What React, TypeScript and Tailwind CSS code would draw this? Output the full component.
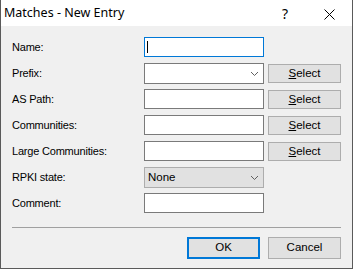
import React from "react";

const Chevron = () => (
  <svg width="9" height="6" viewBox="0 0 9 6" className="absolute right-[4px] top-1/2 -translate-y-1/2">
    <polyline points="1,1 4.5,4.5 8,1" fill="none" stroke="#606060" strokeWidth="1" />
  </svg>
);

const SelectBtn = () => (
  <button className="w-[73px] h-[19px] mt-px ml-[4px] bg-[#e1e1e1] border border-[#adadad] text-[11.5px] leading-none text-black flex items-center justify-center">
    <span><span className="underline">S</span>elect</span>
  </button>
);

const TextBox = ({ focused }: { focused?: boolean }) => (
  <div
    className={`relative w-[120px] h-[20px] bg-white border ${
      focused ? "border-[#0078d7]" : "border-[#7a7a7a]"
    }`}
  >
    {focused && <div className="absolute left-[2px] top-[3px] w-px h-[12px] bg-black" />}
  </div>
);

const Combo = () => (
  <div className="relative w-[120px] h-[21px] bg-white border border-[#7a7a7a]">
    <Chevron />
  </div>
);

const Row = ({ label, children }: { label: string; children: React.ReactNode }) => (
  <div className="flex h-[26px] items-start">
    <div className="w-[132px] h-[20px] flex items-center text-[11px] tracking-[-0.2px] text-black">{label}</div>
    <div className="flex items-start">{children}</div>
  </div>
);

export default function App() {
  return (
    <div
      className="w-[353px] h-[269px] bg-[#f0f0f0] border-l border-r border-b border-[#5a5a5a] flex flex-col"
      style={{ fontFamily: '"Liberation Sans", Arial, sans-serif' }}
    >
      <div className="h-[26px] bg-white flex items-center relative shrink-0">
        <span
          className="pl-[3px] text-[12.5px] text-black"
          style={{ fontFamily: '"Noto Sans", "Open Sans", sans-serif' }}
        >
          Matches - New Entry
        </span>
        <span
          className="absolute left-[281px] top-[3px] text-[14px] text-black"
          style={{ fontFamily: '"Noto Sans", sans-serif' }}
        >
          ?
        </span>
        <svg width="11" height="11" viewBox="0 0 11 11" className="absolute left-[323px] top-[9px]">
          <line x1="0.5" y1="0.5" x2="10.5" y2="10.5" stroke="#000" strokeWidth="1" />
          <line x1="10.5" y1="0.5" x2="0.5" y2="10.5" stroke="#000" strokeWidth="1" />
        </svg>
      </div>
      <div className="pl-[11px] pt-[11px] flex flex-col">
        <Row label="Name:">
          <TextBox focused />
        </Row>
        <Row label="Prefix:">
          <Combo />
          <SelectBtn />
        </Row>
        <Row label="AS Path:">
          <TextBox />
          <SelectBtn />
        </Row>
        <Row label="Communities:">
          <TextBox />
          <SelectBtn />
        </Row>
        <Row label="Large Communities:">
          <TextBox />
          <SelectBtn />
        </Row>
        <Row label="RPKI state:">
          <div className="relative w-[120px] h-[21px] bg-[#e1e1e1] border border-[#adadad] flex items-center pl-[3px] text-[11.5px] text-black">
            None
            <Chevron />
          </div>
        </Row>
        <Row label="Comment:">
          <TextBox />
        </Row>
        <div className="mt-[8px] w-[329px] h-px bg-[#a0a0a0]" />
        <div className="mt-[9px] flex justify-end w-[329px] gap-[8px]">
          <button className="w-[73px] h-[22px] bg-[#e1e1e1] border-2 border-[#0078d7] text-[11.5px] text-black flex items-center justify-center">
            OK
          </button>
          <button className="w-[73px] h-[22px] bg-[#e1e1e1] border border-[#adadad] text-[11.5px] text-black flex items-center justify-center">
            Cancel
          </button>
        </div>
      </div>
    </div>
  );
}
